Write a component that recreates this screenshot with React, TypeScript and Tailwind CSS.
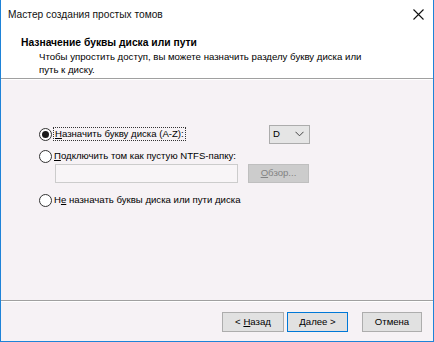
import React from "react";

const font = { fontFamily: '"Liberation Sans", Arial, sans-serif' };

function Radio({ checked }: { checked?: boolean }) {
  return (
    <div className="w-[13px] h-[13px] rounded-full border border-[#333333] bg-white flex items-center justify-center shrink-0">
      {checked && <div className="w-[7px] h-[7px] rounded-full bg-[#1a1a1a]" />}
    </div>
  );
}

export default function App() {
  return (
    <div
      className="w-[434px] h-[342px] flex flex-col border-l border-r border-b border-[#1e83d8] bg-[#f6f2f5] text-[#000] text-[9.6px] overflow-hidden"
      style={font}
    >
      {/* title bar */}
      <div className="h-[29px] bg-white flex items-center justify-between pl-[7px] pr-[9px] shrink-0">
        <span className="text-[10.2px] text-[#111]">Мастер создания простых томов</span>
        <svg width="11" height="11" viewBox="0 0 11 11">
          <path d="M0.5 0.5 L10.5 10.5 M10.5 0.5 L0.5 10.5" stroke="#111" strokeWidth="1.1" />
        </svg>
      </div>
      {/* header */}
      <div className="h-[49px] bg-white flex flex-col pl-[20px] pt-[7px] shrink-0">
        <div className="font-bold text-[10.3px] leading-[13px]">Назначение буквы диска или пути</div>
        <div className="pl-[18px] leading-[13px] text-[9.65px] mt-[1px]">
          <div>Чтобы упростить доступ, вы можете назначить разделу букву диска или</div>
          <div>путь к диску.</div>
        </div>
      </div>
      <div className="h-px bg-[#a0a0a0] shrink-0" />
      <div className="h-px bg-white shrink-0" />
      {/* body */}
      <div className="flex-1 flex flex-col pl-[38px] pt-[45px]">
        <div className="flex items-center h-[18px]">
          <Radio checked />
          <div className="w-[217px] flex">
            <span className="ml-[1px] px-[1px] border border-dotted border-[#333] leading-[12px]">
              <u>Н</u>азначить букву диска (A-Z):
            </span>
          </div>
          <div className="w-[41px] h-[19px] bg-[#e5e5e5] border border-[#acacac] flex items-center justify-between pl-[3px] pr-[5px]">
            <span>D</span>
            <svg width="9" height="6" viewBox="0 0 9 6">
              <path d="M0.5 0.8 L4.5 4.8 L8.5 0.8" stroke="#444" strokeWidth="1" fill="none" />
            </svg>
          </div>
        </div>
        <div className="flex items-center h-[18px] mt-[4px]">
          <Radio />
          <span className="ml-[2px]">
            <u>П</u>одключить том как пустую NTFS-папку:
          </span>
        </div>
        <div className="flex ml-[16px] mt-[-1px]">
          <div className="w-[183px] h-[19px] border border-[#cccccc] bg-[#f8f5f7]" />
          <div className="ml-[10px] w-[61px] h-[19px] border border-[#bfbfbf] bg-[#cccccc] text-[#838383] flex items-center justify-center">
            <span>
              <u>О</u>бзор...
            </span>
          </div>
        </div>
        <div className="flex items-center h-[18px] mt-[8px]">
          <Radio />
          <span className="ml-[2px]">
            Н<u>е</u> назначать буквы диска или пути диска
          </span>
        </div>
      </div>
      <div className="h-px bg-[#a0a0a0] shrink-0" />
      <div className="h-px bg-white shrink-0" />
      {/* buttons */}
      <div className="h-[39px] flex items-start justify-end pt-[10px] pr-[11px] shrink-0">
        <div className="w-[62px] h-[20px] bg-[#e1e1e1] border border-[#adadad] flex items-center justify-center">
          <span>
            &lt; <u>Н</u>азад
          </span>
        </div>
        <div className="ml-[3px] w-[61px] h-[20px] bg-[#e1e1e1] border-[1.5px] border-[#0078d7] flex items-center justify-center">
          <span>
            <u>Д</u>алее &gt;
          </span>
        </div>
        <div className="ml-[14px] w-[60px] h-[20px] bg-[#e1e1e1] border border-[#adadad] flex items-center justify-center">
          <span>Отмена</span>
        </div>
      </div>
    </div>
  );
}
